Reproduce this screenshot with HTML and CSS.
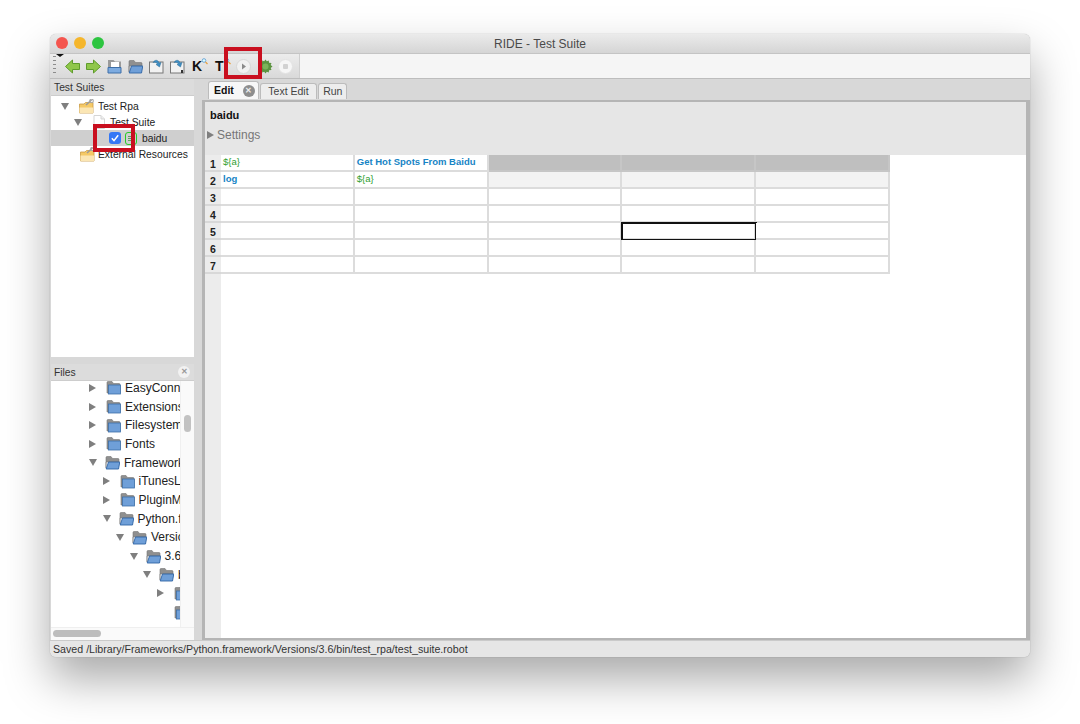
FILE: index.html
```html
<!DOCTYPE html>
<html lang="en">
<head>
    <meta charset="UTF-8">
    <title>RIDE - Test Suite</title>
    <link rel="stylesheet" href="styles.css">
</head>
<body>
<svg class="defs" width="0" height="0">
    <symbol id="folder" viewBox="0 0 15 15">
        <path d="M1 13V2.500C1 2 1.300 1.500 2 1.500H6L7.500 3.500H13C13.600 3.500 14 3.900 14 4.500V13Z" fill="#8f8f8f" stroke="#777" stroke-width=".6"/>
        <rect x="2.500" y="5" width="12" height="9" fill="#6f9fd8" stroke="#3e6fa8" stroke-width=".8"/>
    </symbol>
    <symbol id="folder-open" viewBox="0 0 15 15">
        <path d="M1 13V2.500C1 2 1.300 1.500 2 1.500H6L7.500 3.500H13C13.600 3.500 14 3.900 14 4.500V7H1Z" fill="#8f8f8f" stroke="#777" stroke-width=".6"/>
        <path d="M3.500 7H14.800L13.500 14H1.200Z" fill="#6f9fd8" stroke="#2f64a5" stroke-width=".9"/>
    </symbol>
    <symbol id="res-folder" viewBox="0 0 15 15">
        <path d="M.5 5H5L6.500 3.500H14V14H.5Z" fill="#f5c966" stroke="#c99a45" stroke-width=".8"/>
        <path d="M.5 8.500H14V14H.5Z" fill="#fbe6b4"/>
        <path d="M7 6L12.500 1" stroke="#9a9a9a" stroke-width="1.600"/>
        <circle cx="12.500" cy="2" r="1.800" fill="none" stroke="#a8a8a8" stroke-width="1.100"/>
    </symbol>
</svg>

<div class="window">
    <div class="titlebar">
        <div class="lights">
            <span class="dot red"></span>
            <span class="dot yellow"></span>
            <span class="dot green"></span>
        </div>
        RIDE - Test Suite
    </div>

    <div class="toolbar">
        <div class="tools">
            <span class="grip"></span>
            <span class="grip-arrow"></span>
            <svg class="tool" viewBox="0 0 15 15"><path d="M.5 7.500L7.500 1V4.500H14.500V10.500H7.500V14Z" fill="#8fc74a" stroke="#5f9c2c"/></svg>
            <svg class="tool" viewBox="0 0 15 15"><path d="M14.500 7.500L7.500 1V4.500H.5V10.500H7.500V14Z" fill="#8fc74a" stroke="#5f9c2c"/></svg>
            <svg class="tool" viewBox="0 0 15 15"><path d="M1 14V1H6.500L8 2.500H14V14Z" fill="#9a9a9a"/><rect x="4" y="3" width="8" height="6" fill="#fff"/><path d="M1 8.500H14V14H1Z" fill="#7dabe0" stroke="#3e6fa8"/></svg>
            <svg class="tool" viewBox="0 0 15 15"><use href="#folder-open"/></svg>
            <svg class="tool" viewBox="0 0 15 15"><rect x=".5" y="3" width="13.500" height="11" fill="#f2f2f2" stroke="#777"/><path d="M4 3.500C6 .5 9 .5 10 4L12 3.500L10.500 8L7 5.500L8.500 5C8 3.500 6 3 4 3.500Z" fill="#3f8fc4" stroke="#2a6a97" stroke-width=".5"/></svg>
            <svg class="tool" viewBox="0 0 15 15"><rect x=".5" y="3" width="13.500" height="11" fill="#f2f2f2" stroke="#777"/><path d="M4 3.500C6 .5 9 .5 10 4L12 3.500L10.500 8L7 5.500L8.500 5C8 3.500 6 3 4 3.500Z" fill="#3f8fc4" stroke="#2a6a97" stroke-width=".5"/><rect x="11" y="11" width="2" height="3" fill="#333"/></svg>
            <span class="tool-letter">K<svg class="lens" viewBox="0 0 7 7"><circle cx="3" cy="2.500" r="1.800" fill="#dff" stroke="#6fa6d6"/><path d="M4.500 4L6.500 6" stroke="#e8a040" stroke-width="1.200"/></svg></span>
            <span class="tool-letter second">T<svg class="lens" viewBox="0 0 7 7"><circle cx="3" cy="2.500" r="1.800" fill="#dff" stroke="#6fa6d6"/><path d="M4.500 4L6.500 6" stroke="#e8a040" stroke-width="1.200"/></svg></span>
            <svg class="tool play" viewBox="0 0 15 15"><circle cx="7.500" cy="7.500" r="7" fill="#f1f1f1" stroke="#d6d6d6"/><path d="M6 4.500L10 7.500L6 10.500Z" fill="#8a8a8a"/></svg>
            <svg class="tool bug" viewBox="0 0 15 15"><path d="M7.500 .5L8.800 2.300L10.800 1.500L11 3.800L13.500 4L12.700 6L14.500 7.500L12.700 9L13.500 11L11 11.200L10.800 13.500L8.800 12.700L7.500 14.500L6.200 12.700L4.200 13.500L4 11.200L1.500 11L2.300 9L.5 7.500L2.300 6L1.500 4L4 3.800L4.200 1.500L6.200 2.300Z" fill="#5c9440"/><circle cx="7.500" cy="7.500" r="3" fill="#7cb35a"/></svg>
            <svg class="tool stop" viewBox="0 0 15 15"><circle cx="7.500" cy="7.500" r="7" fill="#f6f6f6" stroke="#e2e2e2"/><rect x="5" y="5" width="5" height="5" rx="1" fill="#d2d2d2"/></svg>
        </div>
    </div>

    <div class="main">
        <div class="side">
            <div class="panel suites">
                <div class="panel-head">Test Suites</div>
                <div class="tree">
                    <div class="suite-row">
                        <span class="arrow down"></span>
                        <svg class="ico-res"><use href="#res-folder"/></svg>
                        <span>Test Rpa</span>
                    </div>
                    <div class="suite-row level2">
                        <span class="arrow down"></span>
                        <svg class="ico-doc" viewBox="0 0 12 14"><path d="M1 .5H8L11.500 4V13.500H1Z" fill="#fff" stroke="#d5d5d5"/><path d="M8 .5V4H11.500" fill="#eee" stroke="#d5d5d5"/></svg>
                        <span>Test Suite</span>
                    </div>
                    <div class="suite-row level3 selected">
                        <span class="check"><svg viewBox="0 0 12 12"><path d="M2.800 6.300L5 8.700L9.200 3.300" fill="none" stroke="#fff" stroke-width="1.500"/></svg></span>
                        <span class="robot"><i></i><i></i><i></i></span>
                        <span>baidu</span>
                    </div>
                    <div class="suite-row external">
                        <svg class="ico-res"><use href="#res-folder"/></svg>
                        <span>External Resources</span>
                    </div>
                </div>
            </div>

            <div class="panel files">
                <div class="panel-head">
                    Files
                    <span class="close small">&#10005;</span>
                </div>
                <div class="files-body">
                    <div class="file-list" id="fileList"></div>
                    <div class="vscroll"><span class="vthumb"></span></div>
                </div>
                <div class="hscroll"><span class="hthumb"></span></div>
            </div>
        </div>

        <div class="content">
            <div class="tabs">
                <div class="tab active">Edit <span class="close">&#10005;</span></div>
                <div class="tab">Text Edit</div>
                <div class="tab run">Run</div>
            </div>
            <div class="editor">
                <div class="editor-head">
                    <div class="suite-name">baidu</div>
                    <div class="settings"><span class="arrow right big"></span>Settings</div>
                </div>
                <div class="grid-wrap">
                    <div class="grid" id="grid"></div>
                </div>
            </div>
        </div>
    </div>

    <div class="statusbar">Saved /Library/Frameworks/Python.framework/Versions/3.6/bin/test_rpa/test_suite.robot</div>
</div>

<div class="mark mark-run"></div>
<div class="mark mark-check"></div>

<script>
    // file tree rows: [indent level, open?, has arrow, label]
    const files = [
        [0, false, true, 'EasyConnect'],
        [0, false, true, 'Extensions'],
        [0, false, true, 'Filesystems'],
        [0, false, true, 'Fonts'],
        [0, true, true, 'Frameworks'],
        [1, false, true, 'iTunesLibrary'],
        [1, false, true, 'PluginManager'],
        [1, true, true, 'Python.framework'],
        [2, true, true, 'Versions'],
        [3, true, true, '3.6'],
        [4, true, true, 'bin'],
        [5, false, true, 'include'],
        [5, false, false, 'lib'],
    ];

    const fileList = document.getElementById('fileList');
    files.forEach(row => {
        const el = document.createElement('div');
        el.className = 'file-row';
        el.style.paddingLeft = (row[0] * 13.5) + 'px';
        const arrow = row[2] ? `<span class="arrow ${row[1] ? 'down' : 'right'}"></span>` : '<span class="arrow-gap"></span>';
        el.innerHTML = `${arrow}<svg class="ico-folder"><use href="#${row[1] ? 'folder-open' : 'folder'}"/></svg><span>${row[3]}</span>`;
        fileList.appendChild(el);
    });
    const lastRow = document.createElement('div');
    lastRow.className = 'file-row';
    lastRow.style.paddingLeft = (5 * 13.5) + 'px';
    lastRow.innerHTML = '<span class="arrow-gap"></span><svg class="ico-stub" viewBox="0 0 12 14"><path d="M.5 .5H11.500V13.500H.5Z" fill="#fff" stroke="#bbb"/></svg>';
    fileList.appendChild(lastRow);

    // 7 rows x 5 columns of the keyword table
    const cells = {
        '0-0': ['var', '${a}'],
        '0-1': ['kw', 'Get Hot Spots From Baidu'],
        '1-0': ['kw', 'log'],
        '1-1': ['var', '${a}'],
    };
    const grid = document.getElementById('grid');
    for (let r = 0; r < 7; r++) {
        const label = document.createElement('div');
        label.className = 'row-label';
        label.textContent = r + 1;
        grid.appendChild(label);
        for (let c = 0; c < 5; c++) {
            const cell = document.createElement('div');
            cell.className = 'cell';
            if (r === 0 && c > 1) cell.classList.add('dark');
            if (r === 1 && c > 1) cell.classList.add('pale');
            if (r === 4 && c === 3) cell.classList.add('current');
            const data = cells[r + '-' + c];
            if (data) {
                cell.classList.add(data[0]);
                cell.textContent = data[1];
            }
            grid.appendChild(cell);
        }
    }
</script>
</body>
</html>
```

FILE: styles.css
```css
/* CSS styles */
html, body {
    margin: 0;
    height: 100%;
}
body {
    background-color: #fff;
    font-family: "Liberation Sans", Arial, sans-serif;
    font-size: 11px;
    color: #222;
    padding: 34px 0 0 50px;
    box-sizing: border-box;
    overflow: hidden;
}
.defs {
    position: absolute;
}
.window {
    width: 980px;
    height: 623px;
    background-color: #e6e6e6;
    border-radius: 6px;
    box-shadow: 0 22px 45px rgba(0, 0, 0, 0.34), 0 0 1px rgba(0, 0, 0, 0.4);
    display: flex;
    flex-direction: column;
    overflow: hidden;
}

/* title bar */
.titlebar {
    position: relative;
    height: 19px;
    flex: none;
    background: linear-gradient(#ebebeb, #d5d5d5);
    border-bottom: 1px solid #c4c4c4;
    text-align: center;
    font-size: 12px;
    line-height: 20px;
    color: #4a4a4a;
}
.lights {
    position: absolute;
    left: 6px;
    top: 3px;
    display: flex;
    gap: 6px;
}
.dot {
    width: 12px;
    height: 12px;
    border-radius: 50%;
}
.red { background-color: #f4554e; }
.yellow { background-color: #f5b62c; }
.green { background-color: #2dc540; }

/* toolbar */
.toolbar {
    height: 25px;
    flex: none;
    box-sizing: border-box;
    background-color: #f5f5f5;
    border-bottom: 1px solid #bdbdbd;
    display: flex;
}
.tools {
    position: relative;
    width: 250px;
    background: linear-gradient(#ececec, #d9d9d9);
    border-right: 1px solid #cfcfcf;
    display: flex;
    align-items: center;
    padding-left: 3px;
    box-sizing: border-box;
}
.grip {
    width: 3px;
    height: 20px;
    margin-right: 9px;
    background: repeating-linear-gradient(#8c8c8c 0 1px, transparent 1px 4px);
}
.grip-arrow {
    position: absolute;
    left: 6px;
    top: 0;
    border-left: 4px solid transparent;
    border-right: 4px solid transparent;
    border-top: 3px solid #111;
}
.tool {
    width: 15px;
    height: 15px;
    margin-right: 6px;
    flex: none;
}
.tool-letter {
    position: relative;
    width: 22px;
    font-size: 14px;
    font-weight: bold;
    color: #111;
    margin-left: 1px;
}
.tool-letter.second {
    width: 21px;
}
.lens {
    position: absolute;
    left: 9px;
    top: 0;
    width: 7px;
    height: 7px;
}
.play {
    margin-right: 7px;
}
.bug {
    margin-right: 5px;
}

/* main area */
.main {
    flex: 1;
    display: flex;
    min-height: 0;
    background-color: #d8d8d8;
}
.side {
    width: 144px;
    flex: none;
    display: flex;
    flex-direction: column;
    gap: 7px;
    padding-left: 1px;
    box-sizing: border-box;
}
.panel {
    display: flex;
    flex-direction: column;
    background-color: #fff;
}
.suites {
    height: 278px;
}
.files {
    flex: 1;
    min-height: 0;
}
.panel-head {
    position: relative;
    height: 17px;
    flex: none;
    background-color: #dcdcdc;
    border-bottom: 1px solid #cdcdcd;
    box-sizing: border-box;
    padding-left: 3px;
    line-height: 17px;
    font-size: 10.300px;
    color: #333;
}
.tree {
    flex: 1;
    padding-top: 2px;
}
.suite-row {
    height: 16px;
    display: flex;
    align-items: center;
    padding-left: 10px;
    white-space: nowrap;
    font-size: 10.300px;
}
.suite-row.level2 {
    padding-left: 23px;
}
.suite-row.level2 .arrow {
    margin-right: 11px;
}
.suite-row.level3 {
    padding-left: 58px;
}
.suite-row.external {
    padding-left: 29px;
}
.suite-row.external .ico-res {
    margin-right: 3px;
}
.selected {
    background-color: #cfcfcf;
}
.arrow {
    width: 0;
    height: 0;
    flex: none;
}
.arrow.down {
    border-left: 4.500px solid transparent;
    border-right: 4.500px solid transparent;
    border-top: 7px solid #7f7f7f;
    margin: 0 10px 0 0;
}
.arrow.right {
    border-top: 4.500px solid transparent;
    border-bottom: 4.500px solid transparent;
    border-left: 7px solid #7f7f7f;
    margin: 0 12px 0 0;
}
.arrow.big {
    display: inline-block;
    margin-right: 3px;
}
.ico-res {
    width: 15px;
    height: 15px;
    margin-right: 4px;
    flex: none;
}
.ico-doc {
    width: 12px;
    height: 14px;
    margin-right: 5px;
    flex: none;
}
.check {
    width: 12px;
    height: 12px;
    margin-right: 4px;
    background-color: #3478f6;
    border-radius: 3px;
    flex: none;
}
.check svg {
    display: block;
}
.robot {
    width: 12px;
    height: 13px;
    margin-right: 5px;
    border: 1.500px solid #25cc25;
    border-radius: 3px;
    box-sizing: border-box;
    flex: none;
    display: flex;
    flex-direction: column;
    justify-content: center;
    gap: 1px;
    padding: 0 2px;
}
.robot i {
    height: 1px;
    background-color: #5f9f5f;
}

/* files tree */
.files-body {
    flex: 1;
    min-height: 0;
    display: flex;
    overflow: hidden;
}
.file-list {
    width: 129px;
    flex: none;
    overflow: hidden;
    padding-left: 38px;
    box-sizing: border-box;
    margin-top: -2.500px;
}
.file-row {
    height: 18.700px;
    display: flex;
    align-items: center;
    white-space: nowrap;
    font-size: 12px;
}
.file-row .arrow.down {
    margin-right: 8px;
}
.file-row .arrow.right {
    margin-right: 10px;
}
.arrow-gap {
    width: 17px;
    flex: none;
}
.ico-folder {
    width: 15px;
    height: 15px;
    margin-right: 4px;
    flex: none;
}
.ico-stub {
    width: 9px;
    height: 12px;
}
.vscroll {
    flex: 1;
    background-color: #fafafa;
    border-left: 1px solid #f0f0f0;
}
.vthumb {
    display: block;
    width: 7px;
    height: 17px;
    margin: 34px 0 0 3px;
    border-radius: 4px;
    background-color: #c2c2c2;
}
.hscroll {
    height: 12px;
    flex: none;
    background-color: #fafafa;
    border-top: 1px solid #efefef;
}
.hthumb {
    display: block;
    width: 48px;
    height: 7px;
    margin: 2px 0 0 2px;
    border-radius: 4px;
    background-color: #bdbdbd;
}

/* right side */
.content {
    flex: 1;
    display: flex;
    flex-direction: column;
    margin-left: 8px;
    min-width: 0;
}
.tabs {
    height: 21px;
    flex: none;
    display: flex;
    align-items: flex-end;
    padding-left: 6px;
    box-sizing: border-box;
    gap: 1px;
}
.tab {
    height: 15px;
    padding: 0 7.500px;
    margin-bottom: 1px;
    background-color: #ededed;
    border: 1px solid #bcbcbc;
    border-bottom: none;
    border-radius: 3px 3px 0 0;
    line-height: 15px;
    font-size: 10.500px;
    color: #444;
}
.tab.run {
    padding: 0 4px;
}
.tab.active {
    height: 17px;
    background-color: #f7f7f7;
    font-weight: bold;
    color: #111;
    display: flex;
    align-items: center;
    gap: 9px;
    padding: 0 3px 0 5px;
}
.close {
    width: 12px;
    height: 12px;
    border-radius: 50%;
    background-color: #8d8d8d;
    color: #eee;
    font-size: 8px;
    line-height: 12px;
    text-align: center;
    font-weight: bold;
}
.close.small {
    position: absolute;
    right: 4px;
    top: 2px;
    background-color: #f2f2f2;
    color: #999;
}
.editor {
    flex: 1;
    min-height: 0;
    display: flex;
    flex-direction: column;
    border-style: solid;
    border-color: #b5b5b5;
    border-width: 2px 4px 2px 3px;
    background-color: #fff;
}
.editor-head {
    height: 53px;
    flex: none;
    background-color: #e6e6e6;
    padding: 6px 0 0 5px;
    box-sizing: border-box;
}
.suite-name {
    font-weight: bold;
    font-size: 11px;
    color: #111;
    line-height: 14px;
}
.settings {
    margin-top: 6px;
    margin-left: -3px;
    font-size: 12px;
    color: #767676;
    line-height: 15px;
}
.grid-wrap {
    flex: 1;
    min-height: 0;
    background: linear-gradient(90deg, #ececec 16px, #fff 16px);
}

/* table */
.grid {
    display: grid;
    grid-template-columns: 16px repeat(5, 133.750px);
    grid-auto-rows: 17px;
    width: max-content;
}
.row-label {
    background-color: #ececec;
    border-bottom: 2px solid #d8d8d8;
    box-sizing: border-box;
    text-align: center;
    font-weight: bold;
    font-size: 10.500px;
    line-height: 18px;
    color: #222;
}
.cell {
    background-color: #fff;
    border-right: 2px solid #dcdcdc;
    border-bottom: 2px solid #dcdcdc;
    box-sizing: border-box;
    padding-left: 2px;
    font-size: 9.500px;
    line-height: 14px;
    white-space: nowrap;
}
.cell.dark {
    background-color: #bfbfbf;
    border-color: #c6c6c6;
}
.cell.pale {
    background-color: #f3f3f3;
}
.cell.kw {
    color: #1684c5;
    font-weight: bold;
}
.cell.var {
    color: #2f9e2f;
}
.cell.current {
    outline: 2px solid #111;
    outline-offset: -1px;
}

/* status bar */
.statusbar {
    height: 17px;
    flex: none;
    box-sizing: border-box;
    background-color: #e6e6e6;
    border-top: 1px solid #cacaca;
    padding-left: 3px;
    line-height: 16px;
    font-size: 10.650px;
    color: #333;
}

/* red annotation boxes drawn over the screenshot */
.mark {
    position: absolute;
    border: 4px solid #c90f1f;
    box-sizing: border-box;
}
.mark-run {
    left: 224px;
    top: 47px;
    width: 38px;
    height: 32px;
}
.mark-check {
    left: 93px;
    top: 124px;
    width: 42px;
    height: 28px;
}
```
